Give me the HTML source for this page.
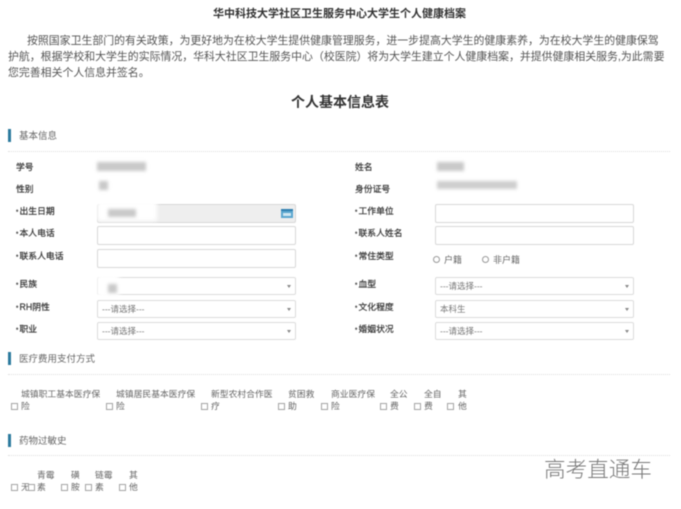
<!DOCTYPE html>
<html lang="zh"><head><meta charset="utf-8"><style>
html,body{margin:0;padding:0;background:#fff;width:681px;height:509px;overflow:hidden}
#r{position:relative;width:681px;height:509px;filter:blur(.45px);font-family:"Liberation Sans","Noto Sans CJK SC",sans-serif;color:#555}
#r div{position:absolute;white-space:nowrap}
.t{height:14px;line-height:14px}
.lb{font-size:8.8px;color:#333;-webkit-text-stroke:.2px #333}
.lb b{display:inline-block;width:3.5px;font-size:6px;font-weight:400}
.sec{font-size:9.5px;color:#666;left:19px}
.bar{left:8px;width:2.5px;height:13px;background:#2c7a9e}
.dot{left:8px;width:662px;height:0;border-top:1px dotted #ddd}
.in{width:197px;height:17px;border:1px solid #d8d8d8;border-radius:2px;background:#fff}
.sel{width:197px;height:16px;border:1px solid #dcdcdc;border-radius:2px;background:#fff;font-size:8.5px;line-height:16px;color:#777;text-indent:4px}
.sel i{position:absolute;right:4px;top:7px;width:0;height:0;border:2px solid transparent;border-top:3px solid #888;border-bottom:0}
.bl{background:#c9c9c9;filter:blur(1.5px)}
.cb{width:5px;height:5px;border:1px solid #a5a5a5;background:#fff}
.o{font-size:8.8px;color:#666;height:12px;line-height:12px}
.ra{width:5px;height:5px;border:1px solid #999;border-radius:50%}
.p{left:8px;font-size:10.9px;line-height:16px;color:#555}
</style></head><body><div id="r">
<div class="t" style="left:213px;top:7px;font-size:11px;font-weight:700;color:#333">华中科技大学社区卫生服务中心大学生个人健康档案</div>
<div class="p" style="left:27px;top:33px">按照国家卫生部门的有关政策，为更好地为在校大学生提供健康管理服务，进一步提高大学生的健康素养，为在校大学生的健康保驾</div>
<div class="p" style="top:49px">护航，根据学校和大学生的实际情况，华科大社区卫生服务中心（校医院）将为大学生建立个人健康档案，并提供健康相关服务,为此需要</div>
<div class="p" style="top:65px">您完善相关个人信息并签名。</div>
<div style="left:291px;top:92px;font-size:14px;line-height:20px;font-weight:700;color:#333">个人基本信息表</div>

<div class="bar" style="top:129px"></div><div class="sec t" style="top:130px">基本信息</div><div class="dot" style="top:151px"></div>

<div class="lb t" style="left:16px;top:160px">学号</div>
<div class="lb t" style="left:16px;top:182px">性别</div>
<div class="lb t" style="left:16px;top:204px"><b>*</b>出生日期</div>
<div class="lb t" style="left:16px;top:226px"><b>*</b>本人电话</div>
<div class="lb t" style="left:16px;top:249px"><b>*</b>联系人电话</div>
<div class="lb t" style="left:16px;top:277px"><b>*</b>民族</div>
<div class="lb t" style="left:16px;top:300px"><b>*</b>RH阴性</div>
<div class="lb t" style="left:16px;top:322px"><b>*</b>职业</div>

<div class="lb t" style="left:355px;top:160px">姓名</div>
<div class="lb t" style="left:355px;top:182px">身份证号</div>
<div class="lb t" style="left:355px;top:204px"><b>*</b>工作单位</div>
<div class="lb t" style="left:355px;top:226px"><b>*</b>联系人姓名</div>
<div class="lb t" style="left:355px;top:249px"><b>*</b>常住类型</div>
<div class="lb t" style="left:355px;top:277px"><b>*</b>血型</div>
<div class="lb t" style="left:355px;top:300px"><b>*</b>文化程度</div>
<div class="lb t" style="left:355px;top:322px"><b>*</b>婚姻状况</div>

<div class="bl" style="left:97px;top:162px;width:49px;height:9px"></div>
<div class="bl" style="left:437px;top:162px;width:27px;height:9px"></div>
<div class="bl" style="left:99px;top:181px;width:9px;height:9px"></div>
<div class="bl" style="left:437px;top:181px;width:80px;height:8px;opacity:.9"></div>

<div class="in" style="left:97px;top:204px;background:#eee"></div>
<div style="left:97px;top:201px;width:60px;height:20px;background:#fff;filter:blur(2px)"></div>
<div class="bl" style="left:108px;top:209px;width:28px;height:8px"></div>
<div style="left:281px;top:209px;width:12px;height:9px;background:#5aa6cf"><div style="left:0;top:0;width:12px;height:2px;background:#2f7fb0"></div><div style="left:2px;top:4px;width:8px;height:3px;background:#cfe6f2"></div></div>
<div class="in" style="left:97px;top:226px"></div>
<div class="in" style="left:97px;top:249px"></div>
<div class="sel" style="left:97px;top:277px"><i></i></div>
<div style="left:97px;top:274px;width:22px;height:24px;background:#fff;filter:blur(2px)"></div>
<div class="bl" style="left:108px;top:284px;width:9px;height:9px"></div>
<div class="sel" style="left:97px;top:300px">---请选择---<i></i></div>
<div class="sel" style="left:97px;top:322px">---请选择---<i></i></div>

<div class="in" style="left:435px;top:204px"></div>
<div class="in" style="left:435px;top:226px"></div>
<div class="ra" style="left:433px;top:256px"></div><div class="o" style="left:444px;top:254px;font-size:9px">户籍</div>
<div class="ra" style="left:482px;top:256px"></div><div class="o" style="left:493px;top:254px;font-size:9px">非户籍</div>
<div class="sel" style="left:435px;top:277px">---请选择---<i></i></div>
<div class="sel" style="left:435px;top:300px">本科生<i></i></div>
<div class="sel" style="left:435px;top:322px">---请选择---<i></i></div>

<div class="bar" style="top:352px"></div><div class="sec t" style="top:353px">医疗费用支付方式</div><div class="dot" style="top:374px"></div>
<div class="o" style="left:21px;top:388px">城镇职工基本医疗保</div><div class="cb" style="left:11px;top:403px"></div><div class="o" style="left:21px;top:400px">险</div>
<div class="o" style="left:116px;top:388px">城镇居民基本医疗保</div><div class="cb" style="left:106px;top:403px"></div><div class="o" style="left:116px;top:400px">险</div>
<div class="o" style="left:211px;top:388px">新型农村合作医</div><div class="cb" style="left:201px;top:403px"></div><div class="o" style="left:211px;top:400px">疗</div>
<div class="o" style="left:288px;top:388px">贫困救</div><div class="cb" style="left:278px;top:403px"></div><div class="o" style="left:288px;top:400px">助</div>
<div class="o" style="left:331px;top:388px">商业医疗保</div><div class="cb" style="left:321px;top:403px"></div><div class="o" style="left:331px;top:400px">险</div>
<div class="o" style="left:390px;top:388px">全公</div><div class="cb" style="left:380px;top:403px"></div><div class="o" style="left:390px;top:400px">费</div>
<div class="o" style="left:424px;top:388px">全自</div><div class="cb" style="left:414px;top:403px"></div><div class="o" style="left:424px;top:400px">费</div>
<div class="o" style="left:458px;top:388px">其</div><div class="cb" style="left:447px;top:403px"></div><div class="o" style="left:458px;top:400px">他</div>

<div class="bar" style="top:434px"></div><div class="sec t" style="top:435px">药物过敏史</div><div class="dot" style="top:455px"></div>
<div class="cb" style="left:11px;top:484px"></div><div class="o" style="left:21px;top:481px">无</div>
<div class="o" style="left:37px;top:469px">青霉</div><div class="cb" style="left:28px;top:484px"></div><div class="o" style="left:37px;top:481px">素</div>
<div class="o" style="left:71px;top:469px">磺</div><div class="cb" style="left:61px;top:484px"></div><div class="o" style="left:71px;top:481px">胺</div>
<div class="o" style="left:95px;top:469px">链霉</div><div class="cb" style="left:85px;top:484px"></div><div class="o" style="left:95px;top:481px">素</div>
<div class="o" style="left:129px;top:469px">其</div><div class="cb" style="left:119px;top:484px"></div><div class="o" style="left:129px;top:481px">他</div>

<div style="left:544px;top:456px;font-size:21.6px;line-height:28px;color:#777;font-weight:300">高考直通车</div>
</div></body></html>
